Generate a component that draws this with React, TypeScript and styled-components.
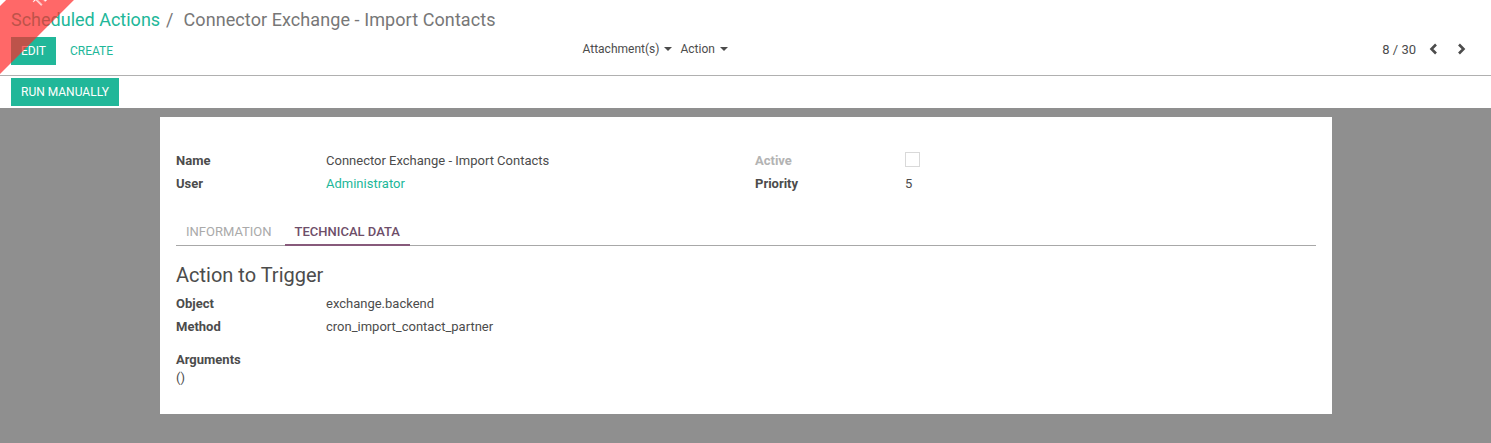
import React from "react";
import styled, { createGlobalStyle } from "styled-components";

const Global = createGlobalStyle`
  html, body { margin: 0; padding: 0; }
  body {
    font-family: Roboto, "Noto Sans", sans-serif;
    font-size: 13px;
    color: #4c4c4c;
    background: #8f8f8f;
    overflow: hidden;
  }
  * { box-sizing: border-box; }
`;

const Page = styled.div`
  width: 1491px;
  height: 443px;
  display: flex;
  flex-direction: column;
  background: #8f8f8f;
`;

const ControlPanel = styled.div`
  background: #fff;
  padding: 8px 11px 0 11px;
  border-bottom: 1px solid #b0b0b0;
  height: 76px;
`;

const Breadcrumb = styled.div`
  display: flex;
  align-items: center;
  font-size: 18px;
  line-height: 24px;
  height: 24px;
  white-space: nowrap;
`;

const CrumbLink = styled.span`
  color: #21b799;
`;

const CrumbSep = styled.span`
  color: #777;
  margin: 0 10px 0 6px;
`;

const CrumbActive = styled.span`
  color: #777;
  letter-spacing: 0.08px;
`;

const ToolRow = styled.div`
  display: grid;
  grid-template-columns: 1fr auto 1fr;
  align-items: center;
  margin-top: 5px;
  height: 28px;
`;

const Buttons = styled.div`
  display: flex;
  align-items: center;
`;

const PrimaryButton = styled.button<{ $pad?: number }>`
  background: #21b799;
  color: #fff;
  border: none;
  height: 28px;
  padding: 0 ${(p) => p.$pad ?? 10}px;
  font-family: Roboto, sans-serif;
  font-size: 12px;
  text-transform: uppercase;
  cursor: pointer;
  line-height: 28px;
`;

const LinkButton = styled.button`
  background: transparent;
  border: none;
  color: #21b799;
  font-family: Roboto, sans-serif;
  font-size: 12px;
  text-transform: uppercase;
  padding: 0 14px;
  height: 28px;
`;

const Sidebar = styled.div`
  display: flex;
  align-items: center;
  gap: 8px;
  margin-left: -163px;
  color: #4c4c4c;
  font-size: 12px;
  margin-top: -4px;
`;

const DropToggle = styled.span`
  display: inline-flex;
  align-items: center;
  gap: 5px;
`;

const Caret = styled.span`
  display: inline-block;
  width: 0;
  height: 0;
  border-left: 4px solid transparent;
  border-right: 4px solid transparent;
  border-top: 4px solid #4c4c4c;
`;

const Pager = styled.div`
  justify-self: end;
  display: flex;
  align-items: center;
  margin-top: -4px;
  margin-right: 6px;
  color: #4c4c4c;
  font-size: 13px;
`;

const PagerValue = styled.span`
  margin-right: 4px;
`;

const PagerBtn = styled.span`
  display: inline-flex;
  width: 27px;
  justify-content: center;
`;

const StatusBar = styled.div`
  background: #fff;
  padding: 2px 11px 3px 11px;
  height: 32px;
`;

const Body = styled.div`
  flex: 1;
  padding-top: 9px;
  display: flex;
  justify-content: flex-start;
`;

const Sheet = styled.div`
  margin-left: 160px;
  width: 1172px;
  height: 297px;
  background: #fff;
  padding: 32px 16px 0 16px;
`;

const Groups = styled.div`
  display: grid;
  grid-template-columns: 561px 1fr;
  column-gap: 18px;
`;

const Field = styled.div`
  display: grid;
  grid-template-columns: 150px 1fr;
  height: 23px;
  align-items: center;
`;

const Label = styled.span<{ $muted?: boolean }>`
  font-weight: 700;
  color: ${(p) => (p.$muted ? "#b3b3b3" : "#4c4c4c")};
`;

const Value = styled.span<{ $link?: boolean }>`
  color: ${(p) => (p.$link ? "#21b799" : "#4c4c4c")};
`;

const Checkbox = styled.span`
  display: block;
  width: 15px;
  height: 15px;
  border: 1px solid #d9d9d9;
  margin-top: -3px;
`;

const Tabs = styled.div`
  display: flex;
  gap: 3px;
  margin-top: 23px;
  border-bottom: 1px solid #a8a8a8;
  height: 28px;
`;

const Tab = styled.div<{ $active?: boolean }>`
  padding: 0 10px;
  height: 28px;
  line-height: 27px;
  font-size: 13px;
  text-transform: uppercase;
  color: ${(p) => (p.$active ? "#6e4e69" : "#aaaaaa")};
  border-bottom: 2px solid ${(p) => (p.$active ? "#875a7b" : "transparent")};
  font-weight: ${(p) => (p.$active ? 500 : 400)};
`;

const Heading = styled.h2`
  margin: 16px 0 4px 0;
  font-size: 20px;
  font-weight: 400;
  line-height: 26px;
  color: #4c4c4c;
`;

const Stacked = styled.div`
  margin-top: 12px;
  display: flex;
  flex-direction: column;
`;

const StackedLabel = styled.span`
  font-weight: 700;
  line-height: 19px;
`;

const StackedValue = styled.span`
  line-height: 18px;
`;

const Ribbon = styled.div`
  position: fixed;
  left: -130px;
  top: -4px;
  width: 300px;
  height: 48px;
  background: rgba(255, 40, 40, 0.7);
  transform: rotate(-45deg);
  color: #fff;
  font-size: 13px;
  font-family: Roboto, sans-serif;
  display: flex;
  align-items: center;
  padding-left: 172px;
  pointer-events: none;
  z-index: 10;
`;

const Chevron = ({ dir }: { dir: "left" | "right" }) => (
  <svg width="10" height="12" viewBox="0 0 10 12">
    <path
      d={dir === "left" ? "M7 1.5 L2.5 6 L7 10.5" : "M3 1.5 L7.5 6 L3 10.5"}
      fill="none"
      stroke="#4c4c4c"
      strokeWidth="2.6"
    />
  </svg>
);

export default function App() {
  return (
    <>
      <Global />
      <Page>
        <ControlPanel>
          <Breadcrumb>
            <CrumbLink>Scheduled Actions</CrumbLink>
            <CrumbSep>/</CrumbSep>
            <CrumbActive>Connector Exchange - Import Contacts</CrumbActive>
          </Breadcrumb>
          <ToolRow>
            <Buttons>
              <PrimaryButton>Edit</PrimaryButton>
              <LinkButton>Create</LinkButton>
            </Buttons>
            <Sidebar>
              <DropToggle>
                Attachment(s) <Caret />
              </DropToggle>
              <DropToggle>
                Action <Caret />
              </DropToggle>
            </Sidebar>
            <Pager>
              <PagerValue>8 / 30</PagerValue>
              <PagerBtn>
                <Chevron dir="left" />
              </PagerBtn>
              <PagerBtn>
                <Chevron dir="right" />
              </PagerBtn>
            </Pager>
          </ToolRow>
        </ControlPanel>
        <StatusBar>
          <PrimaryButton $pad={10}>Run Manually</PrimaryButton>
        </StatusBar>
        <Body>
          <Sheet>
            <Groups>
              <div>
                <Field>
                  <Label>Name</Label>
                  <Value>Connector Exchange - Import Contacts</Value>
                </Field>
                <Field>
                  <Label>User</Label>
                  <Value $link>Administrator</Value>
                </Field>
              </div>
              <div>
                <Field>
                  <Label $muted>Active</Label>
                  <span>
                    <Checkbox />
                  </span>
                </Field>
                <Field>
                  <Label>Priority</Label>
                  <Value>5</Value>
                </Field>
              </div>
            </Groups>
            <Tabs>
              <Tab>Information</Tab>
              <Tab $active>Technical Data</Tab>
            </Tabs>
            <Heading>Action to Trigger</Heading>
            <Field>
              <Label>Object</Label>
              <Value>exchange.backend</Value>
            </Field>
            <Field>
              <Label>Method</Label>
              <Value>cron_import_contact_partner</Value>
            </Field>
            <Stacked>
              <StackedLabel>Arguments</StackedLabel>
              <StackedValue>()</StackedValue>
            </Stacked>
          </Sheet>
        </Body>
      </Page>
      <Ribbon>TEST</Ribbon>
    </>
  );
}
